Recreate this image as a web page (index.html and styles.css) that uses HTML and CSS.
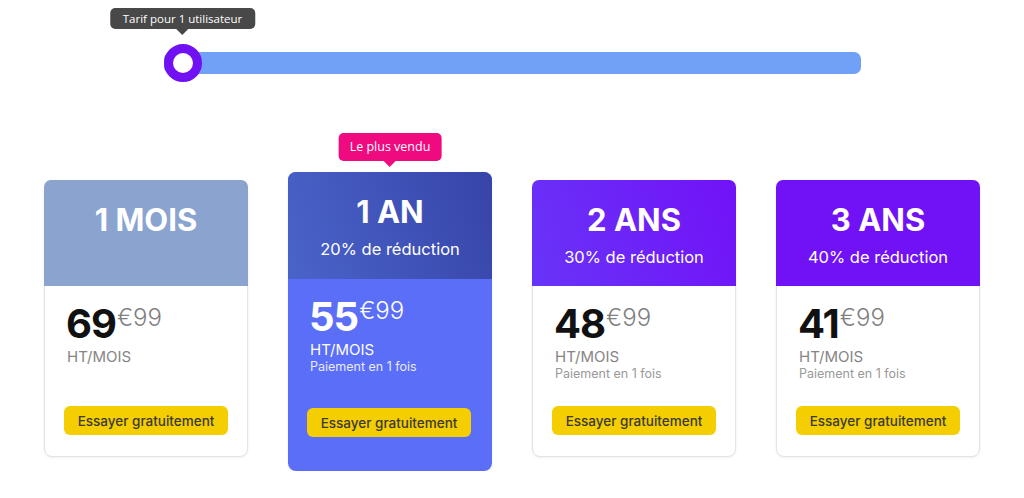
FILE: index.html
```html
<!DOCTYPE html>
<html lang="fr">
<head>
    <meta charset="UTF-8">
    <meta name="viewport" content="width=device-width, initial-scale=1.0">
    <title>Tarifs</title>
    <link rel="stylesheet" href="styles.css">
</head>
<body>
    <div class="page">
        <div class="slider">
            <div class="slider-track">
                <span class="slider-handle">
                    <span class="slider-tip">Tarif pour 1 utilisateur</span>
                </span>
            </div>
        </div>

        <div class="plans">
            <div class="plan plan-month">
                <div class="plan-head">
                    <h2>1 MOIS</h2>
                </div>
                <div class="plan-body">
                    <div class="price"><span class="price-main">69</span><span class="price-cents">€99</span></div>
                    <div class="price-unit">HT/MOIS</div>
                    <button class="try">Essayer gratuitement</button>
                </div>
            </div>

            <div class="plan plan-year">
                <span class="badge">Le plus vendu</span>
                <div class="plan-head">
                    <h2>1 AN</h2>
                    <p>20% de réduction</p>
                </div>
                <div class="plan-body">
                    <div class="price"><span class="price-main">55</span><span class="price-cents">€99</span></div>
                    <div class="price-unit">HT/MOIS</div>
                    <div class="price-note">Paiement en 1 fois</div>
                    <button class="try">Essayer gratuitement</button>
                </div>
            </div>

            <div class="plan plan-two">
                <div class="plan-head">
                    <h2>2 ANS</h2>
                    <p>30% de réduction</p>
                </div>
                <div class="plan-body">
                    <div class="price"><span class="price-main">48</span><span class="price-cents">€99</span></div>
                    <div class="price-unit">HT/MOIS</div>
                    <div class="price-note">Paiement en 1 fois</div>
                    <button class="try">Essayer gratuitement</button>
                </div>
            </div>

            <div class="plan plan-three">
                <div class="plan-head">
                    <h2>3 ANS</h2>
                    <p>40% de réduction</p>
                </div>
                <div class="plan-body">
                    <div class="price"><span class="price-main">41</span><span class="price-cents">€99</span></div>
                    <div class="price-unit">HT/MOIS</div>
                    <div class="price-note">Paiement en 1 fois</div>
                    <button class="try">Essayer gratuitement</button>
                </div>
            </div>
        </div>
    </div>
</body>
</html>
```

FILE: styles.css
```css
body {
    margin: 0;
    background: #fff;
    font-family: Inter, "Noto Sans", sans-serif;
    color: #111;
}
.page {
    padding-top: 52px;
}
.slider {
    width: 697px;
    margin: 0 auto;
}
.slider-track {
    position: relative;
    height: 22px;
    border-radius: 7px;
    background: #71a1f7;
}
.slider-handle {
    position: absolute;
    left: 0;
    top: -8px;
    width: 20px;
    height: 20px;
    border: 9.5px solid #7110f2;
    border-radius: 50%;
    background: #fff;
}
.slider-tip {
    position: absolute;
    left: 50%;
    bottom: 100%;
    margin-bottom: 24px;
    transform: translateX(-50%);
    white-space: nowrap;
    padding: 0 13px;
    height: 21px;
    line-height: 21px;
    border-radius: 5px;
    background: #484848;
    color: #fff;
    font-family: "Open Sans", sans-serif;
    font-size: 11.5px;
}
.slider-tip::after {
    content: "";
    position: absolute;
    left: 50%;
    top: 100%;
    margin-left: -6px;
    border: 6px solid transparent;
    border-top-color: #484848;
    border-bottom: 0;
}
.plans {
    display: flex;
    justify-content: center;
    align-items: flex-start;
    gap: 40px;
    margin-top: 106px;
}
.plan {
    position: relative;
    width: 204px;
    height: 277px;
    display: flex;
    flex-direction: column;
    border: 1px solid #e3e3e6;
    border-radius: 8px;
    box-shadow: 0 1px 3px rgba(0, 0, 0, 0.06);
    box-sizing: border-box;
    background: #fff;
}
.plan-head {
    height: 106px;
    flex-shrink: 0;
    margin: -1px -1px 0;
    border-radius: 7px 7px 0 0;
    text-align: center;
    color: #fff;
    padding-top: 22px;
    box-sizing: border-box;
}
.plan-head h2 {
    margin: 0;
    font-size: 31px;
    font-weight: 700;
    line-height: 36px;
}
.plan-head p {
    margin: 8px 0 0;
    font-size: 16.5px;
    font-weight: 400;
    line-height: 22px;
}
.plan-month .plan-head {
    background: #8aa4cf;
}
.plan-year {
    height: 299px;
    margin-top: -8px;
    border: 0;
    background: #5a6ef8;
}
.plan-year .plan-head {
    margin: 0;
    border-radius: 8px 8px 0 0;
    height: 107px;
    background: linear-gradient(70deg, #4a64ca, #3744a8);
}
.plan-two .plan-head {
    background: linear-gradient(70deg, #6834f8, #7212f7);
}
.plan-three .plan-head {
    background: #7111f6;
}
.plan-body {
    flex: 1;
    display: flex;
    flex-direction: column;
    align-items: flex-start;
    padding: 18px 19px 21px;
}
.plan-year .plan-body {
    padding-bottom: 34px;
    color: #fff;
}
.price {
    display: flex;
    align-items: flex-start;
    line-height: 40px;
    padding-left: 2px;
}
.price-main {
    font-size: 40px;
    font-weight: 700;
    letter-spacing: -1px;
}
.price-cents {
    font-size: 24px;
    font-weight: 300;
    line-height: 28px;
    margin-left: 1px;
    color: #808080;
}
.price-unit {
    margin-top: 4px;
    padding-left: 3px;
    font-size: 15px;
    line-height: 18px;
    color: #858585;
}
.price-note {
    padding-left: 3px;
    font-size: 12.5px;
    line-height: 16px;
    color: #999;
}
.plan-year .price-cents,
.plan-year .price-unit {
    color: #fff;
}
.plan-year .price-note {
    color: #e8ebff;
}
.try {
    margin-top: auto;
    width: 164px;
    height: 29px;
    border: 0;
    border-radius: 6px;
    background: #f4ce00;
    color: #3b3a30;
    font-family: Inter, "Noto Sans", sans-serif;
    font-size: 13.5px;
    font-weight: 500;
    padding: 0;
}
.badge {
    position: absolute;
    left: 50%;
    top: -39px;
    transform: translateX(-50%);
    white-space: nowrap;
    padding: 0 11px;
    height: 28px;
    line-height: 27px;
    border-radius: 5px;
    background: #ef0a80;
    color: #fff;
    font-family: "Open Sans", sans-serif;
    font-size: 12.5px;
}
.badge::after {
    content: "";
    position: absolute;
    left: 50%;
    top: 100%;
    margin-left: -6px;
    border: 6px solid transparent;
    border-top-color: #ef0a80;
    border-bottom: 0;
}
```
